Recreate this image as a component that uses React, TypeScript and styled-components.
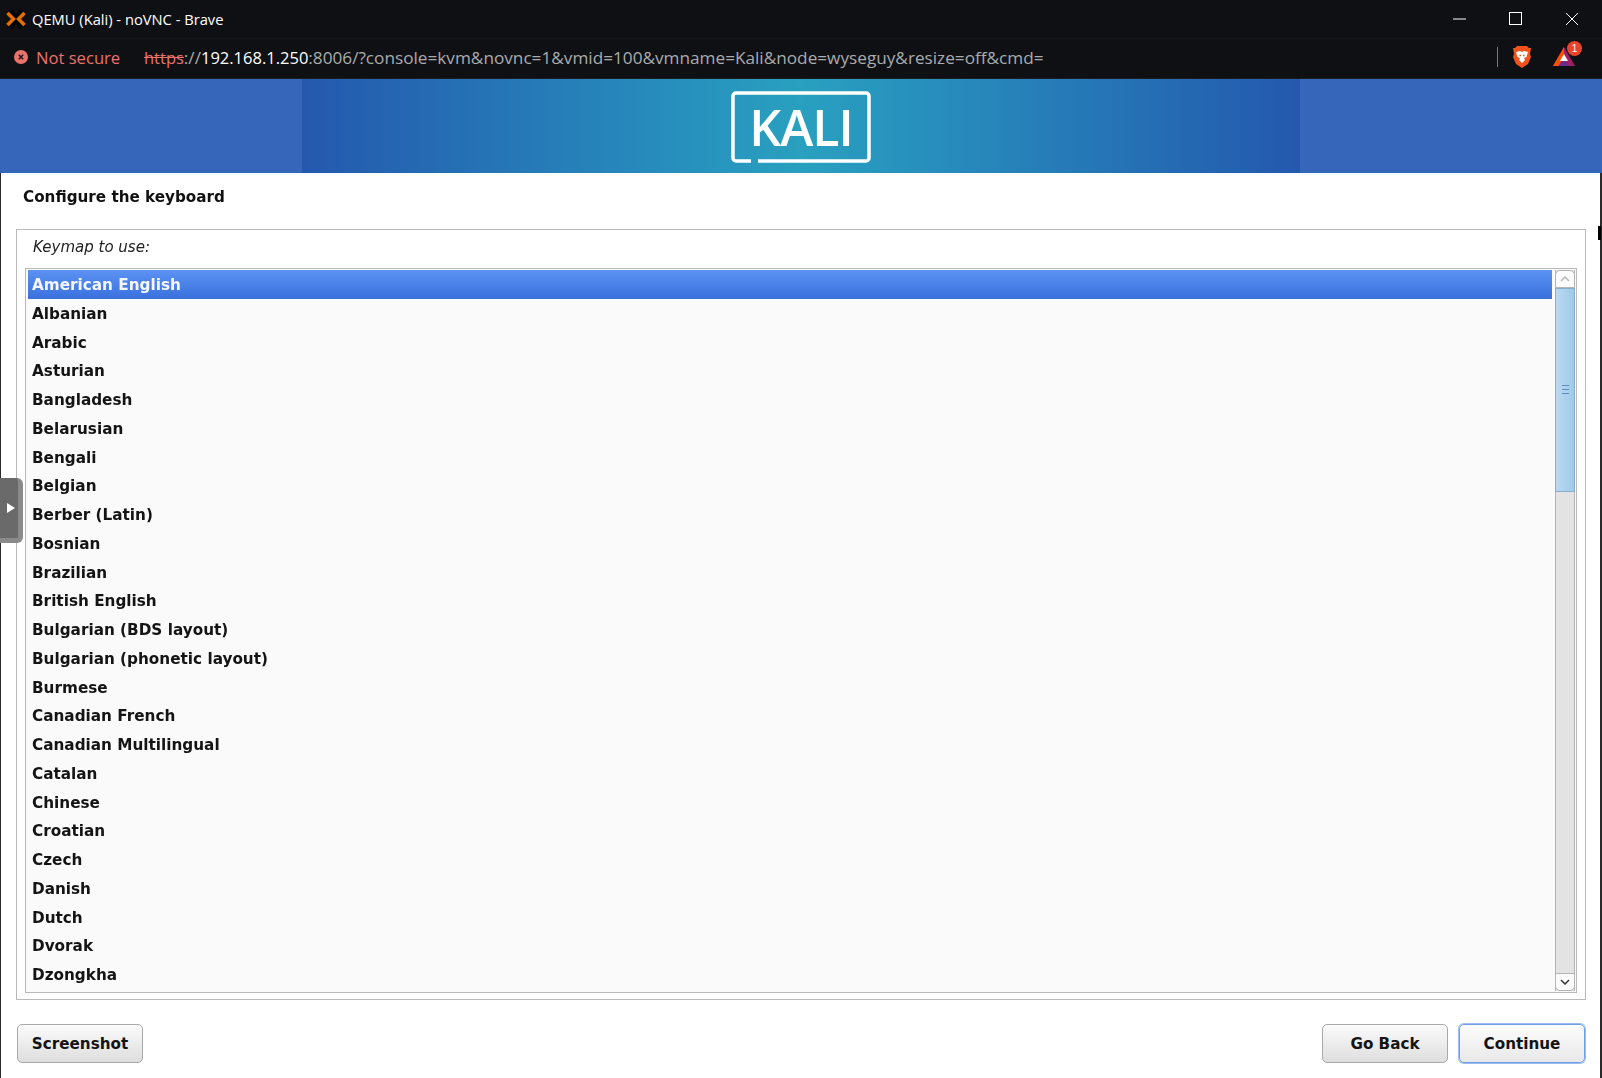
import React from "react";
import styled, { createGlobalStyle } from "styled-components";

const GlobalStyle = createGlobalStyle`
  html, body {
    margin: 0;
    padding: 0;
    background: #fff;
  }
  * {
    box-sizing: border-box;
  }
`;

const Window = styled.div`
  width: 1602px;
  height: 1078px;
  overflow: hidden;
  display: flex;
  flex-direction: column;
  background: #fff;
  position: relative;
`;

// browser chrome
const TitleBar = styled.div`
  height: 39px;
  flex: none;
  display: flex;
  align-items: center;
  background: #0f1014;
  border-bottom: 1px solid #15161b;
  padding: 0 2px 0 5px;
  color: #fff;
  font: 14.7px "Open Sans", "Liberation Sans", sans-serif;
`;

const WindowTitle = styled.span`
  margin-left: 5px;
  flex: 1;
`;

const WindowButton = styled.div`
  width: 56px;
  height: 38px;
  display: flex;
  align-items: center;
  justify-content: center;
`;

const AddressBar = styled.div`
  height: 40px;
  flex: none;
  display: flex;
  align-items: center;
  background: #0f1014;
  border-bottom: 1px solid #1b1c20;
  padding: 0 11px 3px 14px;
  font: 16.6px "Open Sans", "Liberation Sans", sans-serif;
`;

const NotSecure = styled.span`
  color: #e8736b;
  margin-left: 8px;
  width: 108px;
`;

const Url = styled.span`
  color: #a9abad;
  flex: 1;
  font-size: 17.2px;
`;

const Scheme = styled.span`
  color: #e8736b;
  font-size: 16.5px;
  text-decoration: line-through;
`;

const Host = styled.span`
  color: #fff;
  font-size: 16.5px;
`;

const BarDivider = styled.div`
  width: 1px;
  height: 20px;
  background: #77787c;
  margin-right: 14px;
`;

const RewardsIcon = styled.div`
  width: 42px;
  height: 32px;
  margin-left: 11px;
  margin-right: 6px;
  position: relative;
  display: flex;
  align-items: center;
  justify-content: center;
`;

const Badge = styled.span`
  position: absolute;
  top: 0;
  right: 3px;
  width: 15px;
  height: 15px;
  border-radius: 50%;
  background: #e8442c;
  color: #fff;
  font: 10px/15px "Liberation Sans", sans-serif;
  text-align: center;
`;

// installer banner
const Banner = styled.div`
  height: 94px;
  flex: none;
  display: flex;
  justify-content: center;
  background: #3566b9;
`;

const BannerCentre = styled.div`
  width: 998px;
  display: flex;
  align-items: center;
  justify-content: center;
  background: linear-gradient(
    90deg,
    #2458ae 0%,
    #2790bd 38%,
    #29a0bf 50%,
    #2790bd 62%,
    #2458ae 100%
  );
`;

const Logo = styled.div`
  width: 140px;
  height: 72px;
  margin-top: 2px;
  position: relative;
  display: flex;
  align-items: center;
  justify-content: center;
  color: #fff;
  font: 600 50px "Open Sans", "Liberation Sans", sans-serif;
  letter-spacing: -1px;
  svg {
    position: absolute;
    inset: 0;
  }
`;

// installer body
const Body = styled.div`
  flex: 1;
  display: flex;
  flex-direction: column;
  padding: 0 14px 0 15px;
  border-left: 1px solid #2a2a2a;
  border-right: 2px solid #2a2a2a;
  font-family: "DejaVu Sans", sans-serif;
  color: #111;
`;

const Heading = styled.div`
  height: 56px;
  flex: none;
  padding: 15px 0 0 7px;
  font-size: 15.2px;
  font-weight: 700;
  line-height: 19px;
  filter: blur(0.35px);
`;

const Panel = styled.div`
  height: 771px;
  flex: none;
  border: 1px solid #b9b9b9;
  padding: 0 8px 6px;
  display: flex;
  flex-direction: column;
`;

const Prompt = styled.div`
  height: 38px;
  flex: none;
  padding: 8px 0 0 8px;
  font-size: 15px;
  font-style: italic;
  line-height: 18px;
  color: #222;
  filter: blur(0.35px);
`;

const ListFrame = styled.div`
  flex: 1;
  display: flex;
  border: 1px solid #b9b9b9;
  background: #fafafa;
  padding: 1px 1px 1px 2px;
  min-height: 0;
`;

const List = styled.ul`
  flex: 1;
  margin: 0;
  padding: 0;
  list-style: none;
  overflow: hidden;
`;

const Row = styled.li<{ $selected?: boolean }>`
  height: 28.75px;
  padding-left: 4px;
  font-size: 15.25px;
  font-weight: 700;
  line-height: 30.75px;
  color: ${(p) => (p.$selected ? "#f4f7fd" : "#141414")};
  background: ${(p) =>
    p.$selected ? "linear-gradient(180deg, #5b92f2, #3a70dd)" : "transparent"};
`;

const RowLabel = styled.span`
  display: inline-block;
  filter: blur(0.35px);
`;

const ScrollBar = styled.div`
  width: 20px;
  margin-left: 3px;
  display: flex;
  flex-direction: column;
  background: #e3e3e3;
  border-left: 1px solid #b5b5b5;
  border-right: 1px solid #b5b5b5;
`;

const ScrollButton = styled.div<{ $down?: boolean }>`
  height: 18px;
  flex: none;
  display: flex;
  align-items: center;
  justify-content: center;
  background: #fbfbfb;
  border: 1px solid #b5b5b5;
  margin: 0 -1px;
  border-radius: ${(p) => (p.$down ? "0 0 5px 5px" : "5px 5px 0 0")};
  margin-top: ${(p) => (p.$down ? "auto" : "0")};
`;

const Thumb = styled.div`
  height: 204px;
  flex: none;
  display: flex;
  align-items: center;
  justify-content: center;
  padding-bottom: 2px;
  background: linear-gradient(90deg, #bcd8f0, #a9d0ee 60%, #a2c8e8);
  border: 1px solid #87aecf;
  margin: 0 -1px;
`;

const Grip = styled.div`
  width: 7px;
  height: 9px;
  border-top: 1px solid #5f8fb8;
  border-bottom: 1px solid #5f8fb8;
  position: relative;
  &::after {
    content: "";
    position: absolute;
    left: 0;
    right: 0;
    top: 3px;
    height: 1px;
    background: #5f8fb8;
  }
`;

const Footer = styled.div`
  flex: 1;
  display: flex;
  justify-content: space-between;
  padding: 24px 1px 0 1px;
`;

const ButtonGroup = styled.div`
  display: flex;
  gap: 11px;
`;

const Button = styled.button<{ $focused?: boolean }>`
  width: 126px;
  height: 39px;
  border: 1px solid ${(p) => (p.$focused ? "#6f9fe6" : "#a8a8a8")};
  box-shadow: ${(p) => (p.$focused ? "0 0 0 1px #9dbdee" : "none")};
  border-radius: 5px;
  background: ${(p) =>
    p.$focused
      ? "linear-gradient(180deg, #fdfdfd, #e8e8e8)"
      : "linear-gradient(180deg, #fbfbfb, #dedede)"};
  font: 700 15.2px "DejaVu Sans", sans-serif;
  color: #141414;
  padding: 0;
`;

const SideHandle = styled.div`
  position: absolute;
  left: 0;
  top: 478px;
  width: 23px;
  height: 65px;
  background: #6a6a6a;
  border-right: 5px solid #8a8a8a;
  border-bottom: 5px solid #8a8a8a;
  border-radius: 0 6px 6px 0;
  display: flex;
  align-items: center;
  padding-left: 7px;
`;

const Cursor = styled.div`
  position: absolute;
  left: 1598px;
  top: 226px;
  width: 3px;
  height: 14px;
  background: #000;
`;

const keymaps = [
  "American English",
  "Albanian",
  "Arabic",
  "Asturian",
  "Bangladesh",
  "Belarusian",
  "Bengali",
  "Belgian",
  "Berber (Latin)",
  "Bosnian",
  "Brazilian",
  "British English",
  "Bulgarian (BDS layout)",
  "Bulgarian (phonetic layout)",
  "Burmese",
  "Canadian French",
  "Canadian Multilingual",
  "Catalan",
  "Chinese",
  "Croatian",
  "Czech",
  "Danish",
  "Dutch",
  "Dvorak",
  "Dzongkha",
];

const App = () => {
  return (
    <Window>
      <GlobalStyle />
      <TitleBar>
        <svg width="22" height="20" viewBox="0 0 22 20">
          <path d="M6 1 16 19M16 1 6 19" stroke="#000" strokeWidth="4" />
          <path
            d="M2.500 4 8.500 10 2.500 16M19.500 4 13.500 10 19.500 16"
            fill="none"
            stroke="#e57000"
            strokeWidth="3.500"
          />
        </svg>
        <WindowTitle>QEMU (Kali) - noVNC - Brave</WindowTitle>
        <WindowButton>
          <svg width="14" height="14" viewBox="0 0 14 14">
            <path d="M0 7h13" stroke="#fff" strokeWidth="1" />
          </svg>
        </WindowButton>
        <WindowButton>
          <svg width="14" height="14" viewBox="0 0 14 14">
            <rect x="0.5" y="0.5" width="12" height="12" fill="none" stroke="#fff" />
          </svg>
        </WindowButton>
        <WindowButton>
          <svg width="14" height="14" viewBox="0 0 14 14">
            <path d="M1 1l12 12M13 1 1 13" stroke="#fff" strokeWidth="1" />
          </svg>
        </WindowButton>
      </TitleBar>
      <AddressBar>
        <svg width="14" height="14" viewBox="0 0 14 14">
          <circle cx="7" cy="7" r="7" fill="#e8736b" />
          <path d="M4.8 4.8l4.4 4.4M9.2 4.8l-4.4 4.4" stroke="#16171b" strokeWidth="1.4" />
        </svg>
        <NotSecure>Not secure</NotSecure>
        <Url>
          <Scheme>https</Scheme>://<Host>192.168.1.250</Host>:8006/?console=kvm&amp;novnc=1&amp;vmid=100&amp;vmname=Kali&amp;node=wyseguy&amp;resize=off&amp;cmd=
        </Url>
        <BarDivider />
        <svg width="20" height="24" viewBox="0 0 20 24">
          <path d="M5 1h10l2 2 2 0-1 6 1 3-3 7-6 4-6-4-3-7 1-3-1-6 2 0z" fill="#f1511b" />
          <path d="M4 7l4-1 2 1 2-1 4 1-1.500 5-2.500 1 1 2-3 3-3-3 1-2-2.500-1z" fill="#fff" />
          <path d="M7.500 10.500h1.500M11 10.500h1.500" stroke="#f1511b" strokeWidth="1.4" />
        </svg>
        <RewardsIcon>
          <svg width="24" height="22" viewBox="0 0 24 22">
            <path d="M12 1 23 20H1z" fill="#9e1f63" />
            <path d="M12 1 1 20h5.500L12 10z" fill="#ff5000" />
            <path d="M12 14l5.500 6H6.500z" fill="#662d91" />
            <path d="M12 8l4 7H8z" fill="#fff" />
          </svg>
          <Badge>1</Badge>
        </RewardsIcon>
      </AddressBar>
      <Banner>
        <BannerCentre>
          <Logo>
            <svg width="140" height="72" viewBox="0 0 140 72">
              <path
                d="M20 70H5a3 3 0 0 1-3-3V5a3 3 0 0 1 3-3h130a3 3 0 0 1 3 3v62a3 3 0 0 1-3 3H27"
                fill="none"
                stroke="#fff"
                strokeWidth="3.500"
              />
            </svg>
            KALI
          </Logo>
        </BannerCentre>
      </Banner>
      <Body>
        <Heading>Configure the keyboard</Heading>
        <Panel>
          <Prompt>Keymap to use:</Prompt>
          <ListFrame>
            <List>
              {keymaps.map((name, i) => (
                <Row key={name} $selected={i === 0}>
                  <RowLabel>{name}</RowLabel>
                </Row>
              ))}
            </List>
            <ScrollBar>
              <ScrollButton>
                <svg width="10" height="6" viewBox="0 0 10 6">
                  <path d="M1 5l4-4 4 4" fill="none" stroke="#b8b8b8" strokeWidth="1.500" />
                </svg>
              </ScrollButton>
              <Thumb>
                <Grip />
              </Thumb>
              <ScrollButton $down>
                <svg width="10" height="6" viewBox="0 0 10 6">
                  <path d="M1 1l4 4 4-4" fill="none" stroke="#333" strokeWidth="1.500" />
                </svg>
              </ScrollButton>
            </ScrollBar>
          </ListFrame>
        </Panel>
        <Footer>
          <Button>Screenshot</Button>
          <ButtonGroup>
            <Button>Go Back</Button>
            <Button $focused>Continue</Button>
          </ButtonGroup>
        </Footer>
      </Body>
      <SideHandle>
        <svg width="8" height="10" viewBox="0 0 8 10">
          <path d="M0 0l8 5-8 5z" fill="#fff" />
        </svg>
      </SideHandle>
      <Cursor />
    </Window>
  );
};

export default App;
